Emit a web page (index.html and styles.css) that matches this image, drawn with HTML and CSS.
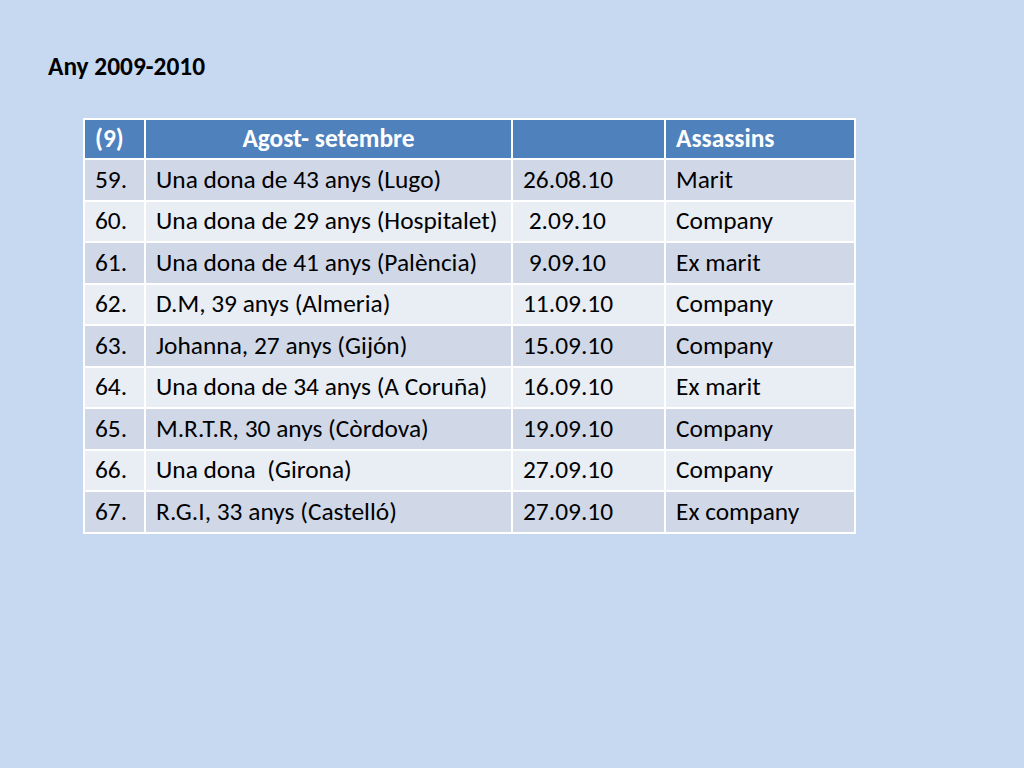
FILE: index.html
```html
<!DOCTYPE html>
<html>
<head>
<meta charset="utf-8">
<link rel="stylesheet" href="styles.css">
</head>
<body>
<div class="slide">
  <h1 class="title">Any 2009-2010</h1>
  <table class="data">
    <colgroup>
      <col class="c1"><col class="c2"><col class="c3"><col class="c4">
    </colgroup>
    <thead>
      <tr><th>(9)</th><th class="center">Agost- setembre</th><th></th><th>Assassins</th></tr>
    </thead>
    <tbody>
      <tr><td>59.</td><td>Una dona de 43 anys (Lugo)</td><td>26.08.10</td><td>Marit</td></tr>
      <tr><td>60.</td><td>Una dona de 29 anys (Hospitalet)</td><td>&nbsp;2.09.10</td><td>Company</td></tr>
      <tr><td>61.</td><td>Una dona de 41 anys (Palència)</td><td>&nbsp;9.09.10</td><td>Ex marit</td></tr>
      <tr><td>62.</td><td>D.M, 39 anys (Almeria)</td><td>11.09.10</td><td>Company</td></tr>
      <tr><td>63.</td><td>Johanna, 27 anys (Gijón)</td><td>15.09.10</td><td>Company</td></tr>
      <tr><td>64.</td><td>Una dona de 34 anys (A Coruña)</td><td>16.09.10</td><td>Ex marit</td></tr>
      <tr><td>65.</td><td>M.R.T.R, 30 anys (Còrdova)</td><td>19.09.10</td><td>Company</td></tr>
      <tr><td>66.</td><td>Una dona&nbsp; (Girona)</td><td>27.09.10</td><td>Company</td></tr>
      <tr><td>67.</td><td>R.G.I, 33 anys (Castelló)</td><td>27.09.10</td><td>Ex company</td></tr>
    </tbody>
  </table>
</div>
</body>
</html>
```
FILE: styles.css
```css
html, body {
  margin: 0;
  padding: 0;
}
body {
  background: #c6d9f0;
  width: 1024px;
  height: 768px;
  overflow: hidden;
  font-family: Carlito, Lato, "Liberation Sans", sans-serif;
  color: #000;
}
.slide {
  padding: 51px 0 0 48px;
}
.title {
  margin: 0;
  font-size: 25.4px;
  font-weight: bold;
  line-height: 32px;
  color: #000;
}
.data {
  margin: 35px 0 0 35px;
  border-collapse: collapse;
  border: 2px solid #fff;
  table-layout: fixed;
  width: 771px;
  font-size: 25.4px;
}
.c1 { width: 61px; }
.c2 { width: 367px; }
.c3 { width: 153px; }
.c4 { width: 190px; }
.data th, .data td {
  border: 2px solid #fff;
  height: 39.5px;
  padding: 0 0 0 10px;
  line-height: 30px;
  text-align: left;
  white-space: pre;
  vertical-align: middle;
}
.data th {
  height: 38px;
  background: #4f81bd;
  color: #fff;
  font-weight: bold;
}
.data th.center {
  text-align: center;
  padding: 0;
}
.data tbody tr:nth-child(odd) td {
  background: #d0d8e8;
}
.data tbody tr:nth-child(even) td {
  background: #e9edf4;
}
```
